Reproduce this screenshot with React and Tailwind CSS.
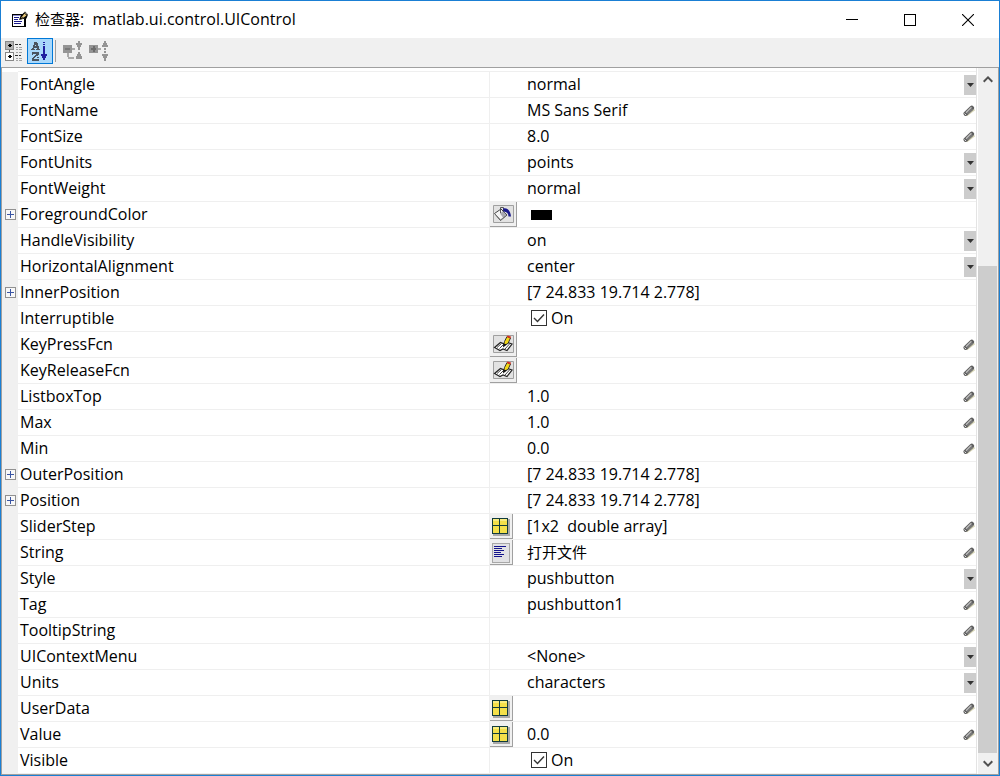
import React, { useState } from "react";

const PROPERTIES = [
  { name: "FontAngle", kind: "select", value: "normal", options: ["normal", "italic", "oblique"] },
  { name: "FontName", kind: "text", value: "MS Sans Serif", edit: true },
  { name: "FontSize", kind: "text", value: "8.0", edit: true },
  { name: "FontUnits", kind: "select", value: "points", options: ["points", "pixels", "inches", "normalized"] },
  { name: "FontWeight", kind: "select", value: "normal", options: ["normal", "bold"] },
  { name: "ForegroundColor", kind: "color", value: "black", action: "fill", expandable: true },
  { name: "HandleVisibility", kind: "select", value: "on", options: ["on", "callback", "off"] },
  { name: "HorizontalAlignment", kind: "select", value: "center", options: ["left", "center", "right"] },
  { name: "InnerPosition", kind: "text", value: "[7 24.833 19.714 2.778]", expandable: true },
  { name: "Interruptible", kind: "check" },
  { name: "KeyPressFcn", kind: "text", value: "", action: "callback", edit: true },
  { name: "KeyReleaseFcn", kind: "text", value: "", action: "callback", edit: true },
  { name: "ListboxTop", kind: "text", value: "1.0", edit: true },
  { name: "Max", kind: "text", value: "1.0", edit: true },
  { name: "Min", kind: "text", value: "0.0", edit: true },
  { name: "OuterPosition", kind: "text", value: "[7 24.833 19.714 2.778]", expandable: true },
  { name: "Position", kind: "text", value: "[7 24.833 19.714 2.778]", expandable: true },
  { name: "SliderStep", kind: "text", value: "[1x2  double array]", action: "matrix", edit: true },
  { name: "String", kind: "text", value: "打开文件", action: "lines", edit: true, cjk: true },
  { name: "Style", kind: "select", value: "pushbutton", options: ["pushbutton", "togglebutton", "radiobutton", "checkbox"] },
  { name: "Tag", kind: "text", value: "pushbutton1", edit: true },
  { name: "TooltipString", kind: "text", value: "", edit: true },
  { name: "UIContextMenu", kind: "select", value: "<None>", options: ["<None>"] },
  { name: "Units", kind: "select", value: "characters", options: ["characters", "pixels", "points", "normalized"] },
  { name: "UserData", kind: "text", value: "", action: "matrix", edit: true },
  { name: "Value", kind: "text", value: "0.0", action: "matrix", edit: true },
  { name: "Visible", kind: "check" },
];

function AppIcon() {
  return (
    <svg width="17" height="17" viewBox="0 0 17 17" shapeRendering="crispEdges" aria-hidden="true">
      <path d="M0 3h14v13H0z" fill="#000" />
      <path d="M1 5h11v10H1z" fill="#fff" />
      <path d="M1 4h8v1H1z" fill="#8888cc" />
      <path d="M2 6h5v1H2zM2 8h4v1H2zM2 10h8v1H2zM2 12h7v1H2z" fill="#1a1a8c" />
      <g shapeRendering="auto">
        <path d="M7 9 8.500 5 13 .5 16 3.500 14.500 7.500 11 8z" fill="#000" />
        <path d="M9 7 12.500 2.500 14.500 4.500 10.500 7.500z" fill="#e8c878" />
        <path d="M13 1.500 15 3.500" stroke="#f4e8c8" />
        <path d="m9.500 6 3 1.500" stroke="#333" strokeWidth=".8" />
      </g>
    </svg>
  );
}

function CategoryIcon() {
  return (
    <svg width="20" height="22" viewBox="0 0 20 22" shapeRendering="crispEdges" aria-hidden="true">
      <path d="M0 1h9v9H0zM0 12h9v9H0z" fill="#888" />
      <path d="M1 2h7v7H1z" fill="#b4b4b4" />
      <path d="M1 13h7v7H1z" fill="#fff" />
      <path d="M4 10h1v2H4z" fill="#555" />
      <path d="M3 5h4v1H3zM4 4h2v3H4zM3 16h4v1H3zM4 15h2v3H4z" fill="#000" />
      <path d="M10 4h3v1h-3zM14 4h2v1h-2zM10 15h3v1h-3zM14 15h2v1h-2z" fill="#333" />
      <path d="M11 7h2v1h-2zM14 7h3v1h-3zM11 9h2v1h-2zM14 9h3v1h-3zM11 12h2v1h-2zM14 12h3v1h-3zM11 18h2v1h-2zM14 18h3v1h-3zM11 20h2v1h-2zM14 20h3v1h-3z" fill="#a4a4a4" />
    </svg>
  );
}

function SortIcon() {
  return (
    <svg width="18" height="22" viewBox="0 0 18 22" shapeRendering="crispEdges" aria-hidden="true">
      <path d="M3 2h3v1H3zM3 3h4v2H3zM2 5h2v1H2zM5 5h2v1H5zM2 6h6v2H2zM1 8h2v1H1zM6 8h2v1H6zM0 9h4v1H0zM5 9h4v1H5z" fill="#4a5460" />
      <path d="M1 12h7v2H1zM1 14h1v1H1zM5 14h3v1H5zM4 15h3v1H4zM3 16h2v1H3zM2 17h2v1H2zM1 18h2v1H1zM6 17h2v1H6zM1 19h7v2H1z" fill="#4a5460" />
      <path d="M12 2h2v1h-2zM12 4h2v1h-2zM12 6h2v8h-2zM10 14h6v1h-6zM10 15h6v1h-6zM11 16h4v2h-4zM12 18h2v2h-2z" fill="#2020a0" />
    </svg>
  );
}

function CollapseIcon() {
  return (
    <svg width="20" height="20" viewBox="0 0 20 20" shapeRendering="crispEdges" aria-hidden="true">
      <path d="M0 4h9v8H0z" fill="#949494" />
      <path d="M2 7h5v2H2z" fill="#777" />
      <path d="M9 7h3v2H9zM4 12h2v4H4zM5 16h6v2H5z" fill="#aaa" />
      <path d="M15 0h2v2h-2zM13 2h6v2h-1v2h-1v3h-2V6h-1V4h-1zM15 11h2v2h1v2h1v3h-6v-3h1v-2h1z" fill="#949494" />
    </svg>
  );
}

function ExpandIcon() {
  return (
    <svg width="20" height="20" viewBox="0 0 20 20" shapeRendering="crispEdges" aria-hidden="true">
      <path d="M0 4h9v8H0z" fill="#949494" />
      <path d="M2 7h5v2H2zM4 5h2v6H4z" fill="#6c6c6c" />
      <path d="M9 7h3v2H9z" fill="#aaa" />
      <path d="M15 0h2v2h1v2h1v2h-6V4h1V2h1zM15 7h2v2h-2zM15 10h2v2h-2zM13 13h6v2h-1v2h-1v3h-2v-3h-1v-2h-1z" fill="#949494" />
    </svg>
  );
}

function FillIcon() {
  return (
    <svg width="21" height="18" viewBox="0 0 21 18" aria-hidden="true">
      <path d="M.5.5h20v17H.5z" fill="#e2e2e2" stroke="#a0a0a0" />
      <path d="M1.500 8.500 8 4l6 6-6.500 5.500z" fill="#f4f4f4" stroke="#444" />
      <path d="M7 8.500 10 6l3.500 4-3.500 2.500z" fill="#a8a8b0" />
      <path d="M7.500 8V2.500h3V7" stroke="#555" fill="none" />
      <path d="M10 3.500c4-1 7.500 1.500 8 8h-2.500c0-3-1.500-4.500-5-5z" fill="#1a1a8c" />
      <path d="m2.500 9.500 5 5.500 5-4" stroke="#777" fill="none" />
    </svg>
  );
}

function CallbackIcon() {
  return (
    <svg width="21" height="18" viewBox="0 0 21 18" aria-hidden="true">
      <path d="M.5.5h20v17H.5z" fill="#e2e2e2" stroke="#a0a0a0" />
      <path d="m1.500 12.500 6-5 4 1.500 3-1.500 4.500 1.500-5 6.500-4-1.500-3 1.500z" fill="#fff" stroke="#222" strokeWidth="1.200" />
      <path d="m4 12.500 4.500-4M6.500 13.500l4.500-4.500M12 14l4.500-5" stroke="#444" />
      <path d="m10.500 10.500 1-4 2.500-5 3.500 1.500-2.500 5.500z" fill="#f2d818" stroke="#222" strokeWidth=".9" />
      <path d="m13.800 2 .7-1.500 3.500 1-.6 2z" fill="#d83020" />
      <path d="m10.500 8.500-.5 4 4-3z" fill="#111" />
    </svg>
  );
}

function MatrixIcon() {
  return (
    <svg width="18" height="18" viewBox="0 0 18 18" shapeRendering="crispEdges" aria-hidden="true">
      <path d="M1 1h17v17H1z" fill="#a8a8a8" />
      <path d="M0 0h16v16H0z" fill="#123c3c" />
      <path d="M1 1h6v6H1zM8 1h7v6H8zM1 8h6v7H1zM8 8h7v7H8z" fill="#f3e04a" />
      <path d="M1 1h6v2H1zM8 1h7v2H8z" fill="#f9ec80" />
    </svg>
  );
}

function LinesIcon() {
  return (
    <svg width="18" height="20" viewBox="0 0 18 20" shapeRendering="crispEdges" aria-hidden="true">
      <path d="M0 0h18v20H0z" fill="#a8a8a8" />
      <path d="M1 1h16v18H1z" fill="#e2e2e4" />
      <path d="M2 3h12v1H2zM2 5h8v1H2zM2 7h10v1H2zM2 9h7v1H2zM2 11h10v1H2zM2 13h8v1H2z" fill="#14148c" />
    </svg>
  );
}

function PencilIcon() {
  return (
    <svg width="13" height="13" viewBox="0 0 13 13" aria-hidden="true">
      <path d="M3.500 11.500 11.500 5.500" stroke="#d8d6b8" strokeWidth="2" />
      <path d="M2.800 9.600 8.800 4" stroke="#606060" strokeWidth="4.600" strokeLinecap="round" />
      <path d="M3.500 8.300 8 3.800" stroke="#b8b8b8" strokeWidth="1.600" strokeLinecap="round" />
      <path d="m4.500 10 5-5" stroke="#999" strokeWidth=".8" />
      <path d="m1.500 9.500 1.500 1.500" stroke="#ddd" />
    </svg>
  );
}

const ACTIONS = {
  fill: { icon: FillIcon, label: "Pick color", size: "w-[27px]" },
  callback: { icon: CallbackIcon, label: "Edit callback", size: "w-[27px]" },
  matrix: { icon: MatrixIcon, label: "Edit array", size: "w-[23px] pt-0.5" },
  lines: { icon: LinesIcon, label: "Edit text", size: "w-[23px] pt-0.5" },
};

function ActionButton({ type, name }) {
  const { icon: Icon, label, size } = ACTIONS[type];
  return (
    <button
      type="button"
      aria-label={`${label}: ${name}`}
      className={`flex h-[25px] items-center justify-center border-r border-b border-[#a0a0a0] bg-[#f0f0f0] ${size}`}
    >
      <Icon />
    </button>
  );
}

function SelectValue({ row }) {
  return (
    <div className="relative flex h-[25px] items-center">
      <select
        aria-label={row.name}
        defaultValue={row.value}
        className="h-[25px] w-full appearance-none bg-transparent pr-4 pb-0.5 outline-none"
      >
        {row.options.map((o) => (
          <option key={o}>{o}</option>
        ))}
      </select>
      <span className="pointer-events-none absolute right-0 flex h-5 w-3 items-center justify-center bg-[#cccccc]">
        <svg width="7" height="4" viewBox="0 0 7 4" aria-hidden="true">
          <path d="M0 0h7L3.500 4z" fill="#333" />
        </svg>
      </span>
    </div>
  );
}

function CheckValue({ row }) {
  const [on, setOn] = useState(true);
  return (
    <label className="flex h-[25px] items-center gap-1 pb-0.5 pl-1">
      <span className="grid size-4 place-items-center">
        <input
          type="checkbox"
          checked={on}
          onChange={() => setOn(!on)}
          aria-label={row.name}
          className="col-start-1 row-start-1 size-4 appearance-none border border-[#333333] bg-white"
        />
        {on && (
          <svg className="pointer-events-none col-start-1 row-start-1" width="12" height="10" viewBox="0 0 12 10" aria-hidden="true">
            <path d="m1 5 3.500 3.500L11 1.500" fill="none" stroke="#333" strokeWidth="1.400" />
          </svg>
        )}
      </span>
      {on ? "On" : "Off"}
    </label>
  );
}

function TextValue({ row }) {
  return (
    <div className="flex h-[25px] items-center">
      <input
        type="text"
        aria-label={row.name}
        defaultValue={row.value}
        className={`h-[25px] min-w-0 flex-1 bg-transparent pb-0.5 outline-none ${row.cjk ? "text-[15px]" : "text-base"}`}
      />
      {row.edit && (
        <button type="button" aria-label={`Edit ${row.name}`} className="shrink-0">
          <PencilIcon />
        </button>
      )}
    </div>
  );
}

function ColorValue({ row }) {
  return (
    <div className="flex h-[25px] items-center pl-1">
      <span role="img" aria-label={row.value} className="h-[10px] w-[21px] bg-black" />
    </div>
  );
}

const EDITORS = { select: SelectValue, text: TextValue, check: CheckValue, color: ColorValue };

function PropertyRow({ row }) {
  const Editor = EDITORS[row.kind];
  return (
    <tr className="h-[26px]">
      <td className="bg-[#f0f0f0] p-0 pb-0.5 pl-[3px]">
        {row.expandable && (
          <button type="button" aria-label={`Expand ${row.name}`} className="block">
            <svg width="11" height="11" viewBox="0 0 11 11" shapeRendering="crispEdges" aria-hidden="true">
              <path d="M0 0h11v11H0z" fill="#919191" />
              <path d="M1 1h9v9H1z" fill="#f8f8f8" />
              <path d="M2 5h7v1H2zM5 2h1v7H5z" fill="#3a55a4" />
            </svg>
          </button>
        )}
      </td>
      <th scope="row" className="border-r border-b border-[#efefef] p-0 pb-0.5 pl-0.5 text-left font-normal">
        {row.name}
      </th>
      <td className="border-b border-[#efefef] p-0">
        {row.action && <ActionButton type={row.action} name={row.name} />}
      </td>
      <td className="border-b border-[#efefef] p-0">
        <Editor row={row} />
      </td>
    </tr>
  );
}

export default function App() {
  return (
    <div className="flex min-h-screen flex-col border border-[#1a7fd4] bg-white font-['Open_Sans','Noto_Sans_CJK_SC',sans-serif] text-base leading-5 text-black">
      <header className="flex h-[37px] items-center pr-0.5">
        <div className="flex flex-1 items-center gap-[6px] pl-[11px]">
          <AppIcon />
          <h1 className="pb-0.5 whitespace-pre">
            <span className="text-[15px]">检查器</span>:  matlab.ui.control.UIControl
          </h1>
        </div>
        <button type="button" aria-label="Minimize" className="flex h-full w-[58px] items-center justify-center">
          <svg width="12" height="12" viewBox="0 0 12 12" shapeRendering="crispEdges" aria-hidden="true">
            <path d="M0 5h12v1H0z" />
          </svg>
        </button>
        <button type="button" aria-label="Maximize" className="flex h-full w-[58px] items-center justify-center">
          <svg width="12" height="12" viewBox="0 0 12 12" shapeRendering="crispEdges" aria-hidden="true">
            <path d="M.5.5h11v11H.5z" fill="none" stroke="#000" />
          </svg>
        </button>
        <button type="button" aria-label="Close" className="flex h-full w-[58px] items-center justify-center">
          <svg width="12" height="12" viewBox="0 0 12 12" aria-hidden="true">
            <path d="m0 0 12 12M12 0 0 12" stroke="#000" strokeWidth="1.100" />
          </svg>
        </button>
      </header>

      <div role="toolbar" aria-label="View" className="flex h-[29px] items-start bg-[#f0f0f0] pl-1">
        <button type="button" aria-label="Group by category" className="flex h-[26px] w-[22px] items-center">
          <CategoryIcon />
        </button>
        <button type="button" aria-label="Sort alphabetically" aria-pressed="true" className="flex h-[26px] w-[26px] items-center justify-center border border-[#0078d7] bg-[#a9d8fb]">
          <SortIcon />
        </button>
        <span className="mx-0.5 mt-0.5 h-[22px] w-px bg-[#a0a0a0]" />
        <button type="button" aria-label="Collapse all" className="ml-[5px] flex h-[26px] w-[26px] items-center">
          <CollapseIcon />
        </button>
        <button type="button" aria-label="Expand all" className="flex h-[26px] w-[26px] items-center">
          <ExpandIcon />
        </button>
      </div>

      <main className="flex flex-1 border border-[#a0a0a0]">
        <div className="flex min-w-0 flex-1 flex-col border-r border-[#e4e4e4]">
          <div className="flex h-1 pl-4">
            <div className="flex-1 border-b border-[#efefef]" />
          </div>
          <table className="w-full table-fixed border-separate border-spacing-0">
            <colgroup>
              <col className="w-4" />
              <col className="w-[472px]" />
              <col className="w-[37px]" />
              <col />
            </colgroup>
            <tbody>
              {PROPERTIES.map((row) => (
                <PropertyRow key={row.name} row={row} />
              ))}
            </tbody>
          </table>
        </div>
        <div className="ml-px flex w-5 flex-col bg-[#f0f0f0] pr-px">
          <button type="button" aria-label="Scroll up" className="flex h-[22px] items-center justify-center">
            <svg width="10" height="7" viewBox="0 0 10 7" aria-hidden="true">
              <path d="m.7 5.700 4.300-4.300 4.300 4.300" fill="none" stroke="#505050" strokeWidth="2" />
            </svg>
          </button>
          <div className="flex flex-1 flex-col">
            <div className="grow-[176]" />
            <div className="grow-[487] bg-[#cdcdcd]" />
          </div>
          <button type="button" aria-label="Scroll down" className="flex h-[21px] items-center justify-center">
            <svg width="10" height="7" viewBox="0 0 10 7" aria-hidden="true">
              <path d="M.7 1.300 5 5.600l4.300-4.300" fill="none" stroke="#505050" strokeWidth="2" />
            </svg>
          </button>
        </div>
      </main>
    </div>
  );
}
